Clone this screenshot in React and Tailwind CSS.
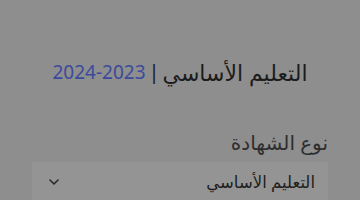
export default function App() {
  return (
    <div
      dir="rtl"
      className="w-[360px] h-[200px] overflow-hidden bg-[#8e8e8e]"
      style={{ fontFamily: '"Noto Sans", "DejaVu Sans", sans-serif' }}
    >
      <div className="pt-[56px] flex justify-center items-center gap-[3px] leading-[32px]">
        <span className="text-[22px] text-[#1c1c1c]">التعليم الأساسي</span>
        <span className="text-[20px] text-[#1c1c1c]">|</span>
        <span className="text-[19px] text-[#3b4a9c]" dir="ltr">2024-2023</span>
      </div>

      <div className="px-[32px] pt-[41px]">
        <label className="block text-[20px] leading-[28px] text-[#2e2e2e]">
          نوع الشهادة
        </label>
        <div className="mt-[5px] h-[40px] rounded-[3px] bg-[#949494] flex items-center justify-between pr-[13px] pl-[16px]">
          <span className="text-[16.5px] text-[#1e1e1e]">التعليم الأساسي</span>
          <svg width="12" height="8" viewBox="0 0 12 8" fill="none" stroke="#2a2a2a" strokeWidth="1.6" strokeLinecap="round" strokeLinejoin="round">
            <path d="M2 2l4 4 4-4" />
          </svg>
        </div>
      </div>
    </div>
  );
}
